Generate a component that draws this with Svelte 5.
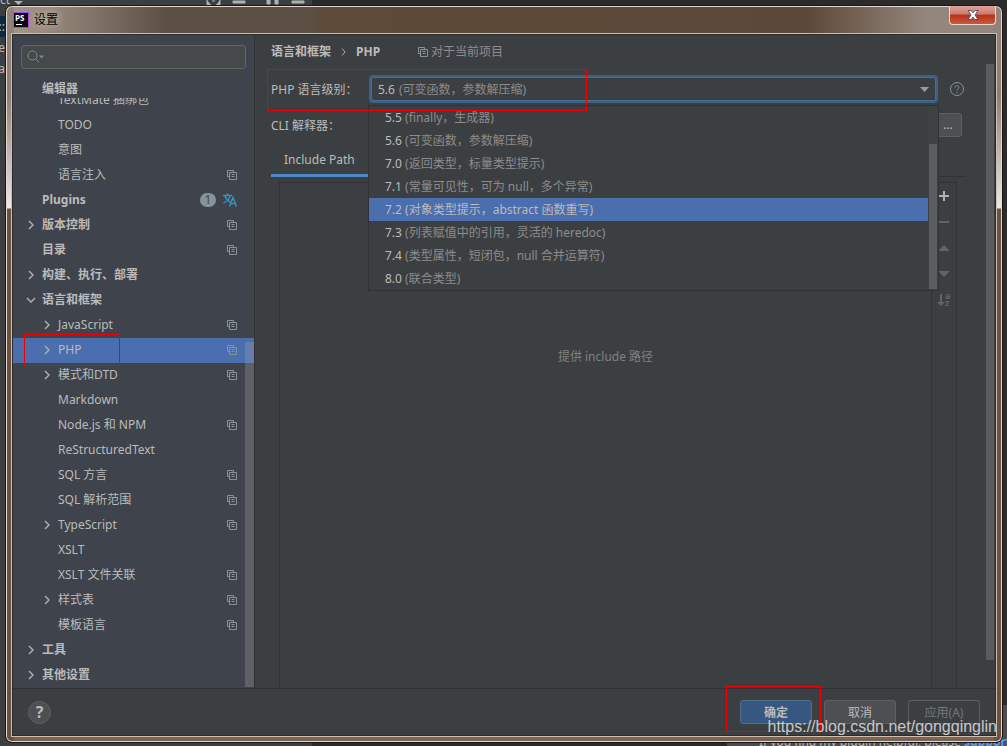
<script lang="ts">
	interface Level {
		version: string;
		hint: string;
	}

	interface Item {
		label: string;
		depth: number;
		arrow?: 'right' | 'down';
		project?: boolean;
		plugins?: boolean;
	}

	const levels: Level[] = [
		{ version: '5.5', hint: '(finally，生成器)' },
		{ version: '5.6', hint: '(可变函数，参数解压缩)' },
		{ version: '7.0', hint: '(返回类型，标量类型提示)' },
		{ version: '7.1', hint: '(常量可见性，可为 null，多个异常)' },
		{ version: '7.2', hint: '(对象类型提示，abstract 函数重写)' },
		{ version: '7.3', hint: '(列表赋值中的引用，灵活的 heredoc)' },
		{ version: '7.4', hint: '(类型属性，短闭包，null 合并运算符)' },
		{ version: '8.0', hint: '(联合类型)' }
	];

	const items: Item[] = [
		{ label: 'TextMate 捆绑包', depth: 1 },
		{ label: 'TODO', depth: 1 },
		{ label: '意图', depth: 1 },
		{ label: '语言注入', depth: 1, project: true },
		{ label: 'Plugins', depth: 0, plugins: true },
		{ label: '版本控制', depth: 0, arrow: 'right', project: true },
		{ label: '目录', depth: 0, project: true },
		{ label: '构建、执行、部署', depth: 0, arrow: 'right' },
		{ label: '语言和框架', depth: 0, arrow: 'down' },
		{ label: 'JavaScript', depth: 1, arrow: 'right', project: true },
		{ label: 'PHP', depth: 1, arrow: 'right', project: true },
		{ label: '模式和DTD', depth: 1, arrow: 'right', project: true },
		{ label: 'Markdown', depth: 1 },
		{ label: 'Node.js 和 NPM', depth: 1, project: true },
		{ label: 'ReStructuredText', depth: 1 },
		{ label: 'SQL 方言', depth: 1, project: true },
		{ label: 'SQL 解析范围', depth: 1, project: true },
		{ label: 'TypeScript', depth: 1, arrow: 'right', project: true },
		{ label: 'XSLT', depth: 1 },
		{ label: 'XSLT 文件关联', depth: 1, project: true },
		{ label: '样式表', depth: 1, arrow: 'right', project: true },
		{ label: '模板语言', depth: 1, project: true },
		{ label: '工具', depth: 0, arrow: 'right' },
		{ label: '其他设置', depth: 0, arrow: 'right' }
	];

	let page = $state('PHP');
	let version = $state('5.6');
	let highlighted = $state('7.2');
	let query = $state('');

	const hint = $derived(levels.find((l) => l.version === version)?.hint ?? '');
</script>

{#snippet projectIcon()}
	<svg class="project" width="10" height="10" viewBox="0 0 10 10" aria-hidden="true">
		<path d="M2.5 6.5h-2v-6h6v2" />
		<path d="M2.5 2.5h7v7h-7zM4.5 4.5h3M4.5 6.5h3" />
	</svg>
{/snippet}

<div class="desktop">
	<div class="ide-top">
		<span class="crumb">ct</span>
		<svg class="ide-icons" width="300" height="6" viewBox="0 0 300 6" aria-hidden="true">
			<path d="M0 1h9L4.5 5z" />
			<path d="M193 0v5h4M198 1h3M206 0v5h-4M219 1h12v2h-12zM253 0v4h3v-4M261 0v4h3v-4M278 1h12v2h-12z" stroke="#afb1b3" />
		</svg>
	</div>
	<div class="ide-left"><span class="line">::</span><span>e</span><span>a</span></div>
	<div class="ide-right"></div>
	<div class="balloon">If you find my plugin helpful, please <a href="#support">support</a></div>

	<div class="window">
		<header class="titlebar">
			<svg class="logo" width="16" height="16" viewBox="0 0 16 16" aria-hidden="true">
				<rect x="0.5" y="0.5" width="15" height="15" fill="#0b0610" stroke="#a54be8" />
				<text x="2" y="9" font-size="8" font-weight="700" fill="#fff">PS</text>
				<rect x="3" y="12" width="6" height="1" fill="#fff" />
			</svg>
			<h1>设置</h1>
			<button class="close" aria-label="关闭">
				<svg width="12" height="10" viewBox="0 0 12 10" aria-hidden="true">
					<path d="M1 .5h3.2L6 2.8 7.8.5H11L8 5l3 4.5H7.8L6 7.2 4.2 9.5H1L4 5z" fill="#fff" stroke="#4d5165" />
				</svg>
			</button>
		</header>

		<div class="client">
			<div class="panes">
				<aside>
					<div class="search">
						<svg width="18" height="14" viewBox="0 0 18 14" aria-hidden="true">
							<circle cx="5.5" cy="5.5" r="4.5" />
							<path d="M9 9l3 3.5" />
							<path class="fill" d="M12 5.5h5l-2.5 3z" />
						</svg>
						<input type="text" aria-label="搜索设置" bind:value={query} />
					</div>
					<div class="sticky">编辑器</div>
					<ul class="tree">
						{#each items as item}
							<li>
								<button
									class="node depth-{item.depth}"
									class:selected={item.label === page}
									onclick={() => (page = item.label)}
								>
									<span class="arrow">
										{#if item.arrow === 'right'}
											<svg width="6" height="10" viewBox="0 0 6 10"><path d="M1 1l4 4-4 4" stroke-width="1.5" /></svg>
										{:else if item.arrow === 'down'}
											<svg width="10" height="6" viewBox="0 0 10 6"><path d="M1 1l4 4 4-4" stroke-width="1.5" /></svg>
										{/if}
									</span>
									<span class="label">{item.label}</span>
									{#if item.plugins}
										<span class="count">1</span>
										<svg class="translate" width="14" height="14" viewBox="0 0 14 14" stroke-width="1.5" aria-hidden="true">
											<path d="M0 2.5h9M4.5.5v2M2 3c1 3 3 5 5.5 6M7 3C6.5 6 4 8.5.5 10" />
											<path d="M6.5 13.5l3.5-9 3.5 9M7.8 10.5h4.5" />
										</svg>
									{/if}
									{#if item.project}{@render projectIcon()}{/if}
								</button>
							</li>
						{/each}
					</ul>
					<div class="side-scroll"></div>
				</aside>

				<main>
					<div class="page">
						<nav class="breadcrumb">
							<b>语言和框架</b>
							<svg width="5" height="8" viewBox="0 0 5 8" aria-hidden="true"><path d="M1 .5L4 4 1 7.5" /></svg>
							<b>PHP</b>
							<span class="scope">{@render projectIcon()}对于当前项目</span>
						</nav>

						<div class="row">
							<label for="level">PHP 语言级别：</label>
							<div class="combo">
								<select id="level" bind:value={version}>
									{#each levels as level}
										<option>{level.version}</option>
									{/each}
								</select>
								<span class="hint">{hint}</span>
								<svg class="caret" width="9" height="5" viewBox="0 0 9 5" aria-hidden="true"><path d="M0 0h9L4.5 5z" /></svg>

								<div class="popup">
									<ul>
										{#each levels as level}
											<li>
												<button
													class:active={level.version === highlighted}
													onmouseenter={() => (highlighted = level.version)}
													onclick={() => (version = level.version)}
												>
													{level.version} <span>{level.hint}</span>
												</button>
											</li>
										{/each}
									</ul>
									<div class="track"><div class="thumb"></div></div>
								</div>
							</div>
							<button class="info" aria-label="帮助">
								<svg width="14" height="14" viewBox="0 0 14 14" aria-hidden="true">
									<circle cx="7" cy="7" r="6.5" />
									<path d="M5 5.5c0-2.5 4-2.5 4 0C9 7 7 6.8 7 8.5M7 9.8v1.2" />
								</svg>
							</button>
						</div>

						<div class="row cli">
							<label for="cli">CLI 解释器：</label>
							<input id="cli" type="text" />
							<button class="more">...</button>
						</div>

						<div class="tabs">
							<button class="tab">Include Path</button>
						</div>

						<div class="paths">
							<div class="empty">提供 include 路径</div>
							<div class="tools">
								<button aria-label="添加" class="add">
									<svg width="14" height="14" viewBox="0 0 14 14"><path d="M6 2h2v4h4v2H8v4H6V8H2V6h4z" /></svg>
								</button>
								<button aria-label="移除">
									<svg width="14" height="14" viewBox="0 0 14 14"><path d="M2 6h10v2H2z" /></svg>
								</button>
								<button aria-label="上移">
									<svg width="14" height="14" viewBox="0 0 14 14"><path d="M1 10l6-6 6 6z" /></svg>
								</button>
								<button aria-label="下移">
									<svg width="14" height="14" viewBox="0 0 14 14"><path d="M1 4l6 6 6-6z" /></svg>
								</button>
								<button aria-label="排序">
									<svg width="14" height="14" viewBox="0 0 14 14">
										<path d="M3 1h2v8h3l-4 4-4-4h3z" />
										<text x="8" y="6" font-size="9" font-weight="700">a</text>
										<text x="8" y="13" font-size="9" font-weight="700">z</text>
									</svg>
								</button>
							</div>
						</div>
					</div>
					<div class="main-scroll"></div>
				</main>
			</div>

			<footer>
				<button class="help" aria-label="帮助">?</button>
				<button class="btn primary">确定</button>
				<button class="btn">取消</button>
				<button class="btn" disabled>应用(A)</button>
			</footer>
		</div>
	</div>

	<div class="mark mark-level"></div>
	<div class="mark mark-tree"></div>
	<div class="mark mark-ok"></div>
	<div class="watermark">https://blog.csdn.net/gongqinglin</div>
</div>

<style>
	:global(body) {
		margin: 0;
		background: #2b2b2b;
	}

	.desktop {
		position: relative;
		display: flex;
		box-sizing: border-box;
		min-height: 100vh;
		padding: 5px 4px 3px 5px;
		overflow: hidden;
		background: linear-gradient(90deg, #3c3f41 312px, #2b2b2b 312px);
		color: #bbbbbb;
		font-family: 'Noto Sans', 'Noto Sans CJK SC', sans-serif;
		font-size: 12px;
		line-height: 16px;
	}

	.desktop * {
		box-sizing: border-box;
	}

	button,
	input,
	select {
		margin: 0;
		padding: 0;
		border: 0;
		background: none;
		color: inherit;
		font: inherit;
		outline: none;
	}

	ul {
		margin: 0;
		padding: 0;
		list-style: none;
	}

	svg {
		display: block;
		flex: none;
		fill: none;
	}

	.ide-top {
		position: absolute;
		top: 0;
		left: 0;
		right: 0;
		display: flex;
		align-items: flex-end;
		gap: 4px;
		height: 6px;
		overflow: hidden;
	}

	.crumb {
		width: 10px;
		line-height: 12px;
	}

	.ide-icons {
		fill: #afb1b3;
	}

	.ide-left {
		position: absolute;
		left: 0;
		top: 16px;
		display: flex;
		flex-direction: column;
		width: 5px;
		overflow: hidden;
		line-height: 21px;
	}

	.ide-left span {
		direction: rtl;
	}

	.ide-left .line {
		background: #0d293e;
	}

	.ide-right {
		position: absolute;
		right: 0;
		bottom: 0;
		width: 5px;
		height: 41px;
		background: #4b4d50;
	}

	.balloon {
		position: absolute;
		right: 0;
		bottom: 0;
		width: 280px;
		height: 10px;
		padding-left: 32px;
		overflow: hidden;
		background: #4b4d50;
		white-space: nowrap;
		line-height: 12px;
	}

	.balloon a {
		color: #589df6;
		font-weight: 700;
	}

	.window {
		position: relative;
		display: flex;
		flex: 1;
		flex-direction: column;
		min-width: 0;
		padding: 0 5px 5px;
		border: 1px solid #171717;
		border-radius: 7px;
		background:
			linear-gradient(#93847b, #8d7f76 90px, #f0e8e4 202px, #6a5140 203px, #6a5140) left / 8px 100% no-repeat,
			linear-gradient(#93847b, #8d7f76 90px, #f0e8e4 202px, #6a5140 203px, #6a5140) right / 8px 100% no-repeat,
			linear-gradient(90deg, #a8988c, #8f8074 60px, #5c4f44 160px, #5b4e42 305px, #5e4a38 320px, #5b4838 800px, #94867b 920px, #94867b) top / 100% 28px no-repeat,
			#7c6353;
		box-shadow: inset 0 0 0 1px #e3d9d2;
	}

	.titlebar {
		display: flex;
		height: 27px;
		padding: 0 1px 0 2px;
	}

	.logo {
		margin-top: 6px;
	}

	.logo text {
		font-family: 'Open Sans', sans-serif;
	}

	h1 {
		flex: 1;
		margin: 6px 0 0 5px;
		color: #000;
		font-size: 12px;
		font-weight: 400;
		text-shadow: 0 0 8px #e8dcd4;
	}

	.close {
		display: flex;
		align-items: center;
		justify-content: center;
		width: 47px;
		height: 19px;
		border: 1px solid #ead8d2;
		border-top: 0;
		border-radius: 0 0 4px 4px;
		background: linear-gradient(#dda39a, #cf7a6c 45%, #b8301a 50%, #c85a3c);
	}

	.client {
		display: flex;
		flex: 1;
		flex-direction: column;
		margin: 1px;
		border: 1px solid #2b2b2b;
		outline: 1px solid #cfc0b0;
		background: #3c3f41;
	}

	.panes {
		display: flex;
		flex: 1;
		border-bottom: 1px solid #323232;
	}

	aside {
		position: relative;
		display: flex;
		flex-direction: column;
		width: 242px;
		border-right: 1px solid #323232;
		background: #3e434c;
	}

	.search {
		display: flex;
		align-items: center;
		height: 24px;
		margin: 10px 8px 0;
		padding: 0 5px;
		border: 1px solid #646464;
		border-radius: 3px;
		background: #45494a;
	}

	.search svg {
		stroke: #7f8b91;
	}

	.search .fill {
		fill: #7f8b91;
		stroke: none;
	}

	.search input {
		flex: 1;
		min-width: 0;
	}

	.sticky {
		height: 29px;
		padding: 12px 0 0 29px;
		font-weight: 700;
	}

	.tree {
		display: flex;
		flex: 1 1 590px;
		flex-direction: column;
		justify-content: flex-end;
		max-height: 590px;
		overflow: hidden;
	}

	.tree li {
		flex: none;
	}

	.node {
		display: flex;
		align-items: center;
		width: 100%;
		height: 25px;
		padding: 0 17px 2px 0;
		text-align: left;
	}

	.depth-0 {
		padding-left: 13px;
		font-weight: 700;
	}

	.depth-1 {
		padding-left: 29px;
	}

	.selected {
		background: #4b6eaf;
	}

	.arrow {
		display: flex;
		justify-content: center;
		width: 10px;
		margin-right: 6px;
	}

	.arrow path {
		stroke: #adadad;
	}

	.label {
		flex: 1;
	}

	.project {
		stroke: #87939a;
	}

	.count {
		width: 16px;
		height: 14px;
		margin-right: 7px;
		border-radius: 7px;
		background: #87939a;
		color: #3e434c;
		font-weight: 400;
		line-height: 14px;
		text-align: center;
	}

	.translate {
		stroke: #3592c4;
	}

	.side-scroll {
		position: absolute;
		right: 0;
		bottom: 1px;
		width: 9px;
		height: 345px;
		background: rgba(166, 166, 166, 0.3);
	}

	main {
		display: flex;
		flex: 1;
		min-width: 0;
	}

	.page {
		display: flex;
		flex: 1;
		flex-direction: column;
		min-width: 0;
		padding: 8px 0 0 16px;
	}

	.main-scroll {
		width: 8px;
		margin: 29px 1px 28px 20px;
		background: #595b5d;
	}

	.breadcrumb {
		display: flex;
		align-items: center;
		gap: 10px;
		height: 18px;
	}

	.breadcrumb > svg {
		stroke: #adadad;
	}

	.scope {
		display: flex;
		align-items: center;
		gap: 3px;
		margin-left: 28px;
		color: #8c8c8c;
	}

	.row {
		display: flex;
		align-items: center;
		height: 36px;
	}

	.row label {
		width: 98px;
		padding-top: 1px;
		white-space: nowrap;
	}

	.breadcrumb + .row {
		margin-top: 10px;
	}

	.combo {
		position: relative;
		display: grid;
		flex: 1;
		align-items: center;
		height: 28px;
		border: 2px solid #3d6185;
		border-radius: 4px;
	}

	.combo > * {
		grid-area: 1 / 1;
	}

	select {
		width: 100%;
		height: 24px;
		padding: 2px 0 0 6px;
		border: 1px solid #466d94;
		border-radius: 2px;
		appearance: none;
	}

	.hint {
		padding: 2px 0 0 28px;
		color: #8c8c8c;
		pointer-events: none;
	}

	.caret {
		justify-self: end;
		margin-right: 7px;
		fill: #9a9da0;
		pointer-events: none;
	}

	.popup {
		position: absolute;
		z-index: 2;
		top: 28px;
		left: -3px;
		right: -3px;
		display: flex;
		border: 1px solid #2f3132;
		background: #3c3f41;
	}

	.popup ul {
		flex: 1;
	}

	.popup button {
		width: 100%;
		height: 23px;
		padding-left: 16px;
		text-align: left;
	}

	.popup button span {
		color: #8c8c8c;
	}

	.popup .active,
	.popup .active span {
		background: #4b6eaf;
		color: #bbbbbb;
	}

	.track {
		width: 10px;
		padding: 38px 1px 1px;
		background: #3f4244;
	}

	.thumb {
		height: 100%;
		background: #5a5d5e;
	}

	.info {
		margin: 0 2px 0 12px;
	}

	.info svg {
		stroke: #87939a;
	}

	.cli input {
		flex: 1;
		min-width: 0;
		height: 24px;
		border: 1px solid #646464;
	}

	.more {
		width: 28px;
		height: 24px;
		margin-right: 4px;
		border: 1px solid #5e6060;
		border-radius: 3px;
		background: #4c5052;
	}

	.tabs {
		display: flex;
		margin-top: 1px;
		border-bottom: 1px solid #323232;
	}

	.tab {
		height: 33px;
		margin-bottom: -1px;
		padding: 2px 13px 0;
		border-bottom: 3px solid #4a88c7;
	}

	.paths {
		display: flex;
		flex: 1;
		margin: 5px 9px 0 8px;
		border: 1px solid #323232;
		border-bottom: 0;
	}

	.empty {
		flex: 1;
		padding-top: 166px;
		color: #808080;
		text-align: center;
	}

	.tools {
		display: flex;
		flex-direction: column;
		width: 25px;
		border-left: 1px solid #323232;
	}

	.tools button {
		display: flex;
		align-items: center;
		justify-content: center;
		height: 26px;
	}

	.tools svg {
		fill: #616365;
	}

	.tools .add svg {
		fill: #afb1b3;
	}

	footer {
		display: flex;
		align-items: center;
		gap: 12px;
		height: 46px;
		padding: 0 15px;
	}

	.help {
		width: 23px;
		height: 23px;
		margin-right: auto;
		border: 1px solid #5e6060;
		border-radius: 50%;
		background: #4c5052;
		font-size: 16px;
		font-weight: 700;
	}

	.btn {
		width: 72px;
		height: 24px;
		padding-top: 2px;
		border: 1px solid #5e6060;
		border-radius: 3px;
		background: #4c5052;
	}

	.primary {
		border-color: #4c708c;
		background: #365880;
		font-weight: 700;
	}

	.btn:disabled {
		background: none;
		color: #777777;
	}

	.mark {
		position: absolute;
		z-index: 3;
		border: 1px solid #f00000;
		pointer-events: none;
	}

	.mark-level {
		top: 69px;
		left: 267px;
		width: 320px;
		height: 42px;
	}

	.mark-tree {
		top: 334px;
		left: 24px;
		width: 96px;
		height: 32px;
	}

	.mark-ok {
		right: 186px;
		bottom: 14px;
		width: 95px;
		height: 46px;
	}

	.watermark {
		position: absolute;
		z-index: 4;
		right: 10px;
		bottom: 9px;
		color: rgba(225, 225, 225, 0.85);
		font-family: 'Liberation Sans', sans-serif;
		font-size: 16px;
		line-height: 20px;
		white-space: nowrap;
		pointer-events: none;
	}
</style>
